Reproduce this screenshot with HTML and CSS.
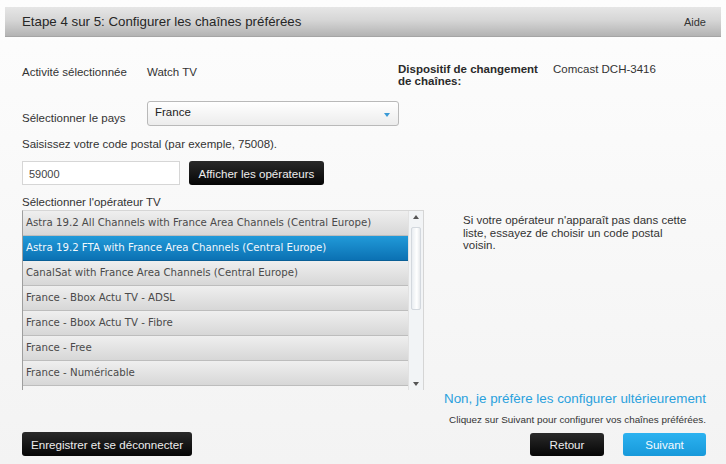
FILE: index.html
```html
<!DOCTYPE html>
<html lang="fr">
<head>
<meta charset="utf-8">
<title>Configurer les chaînes préférées</title>
<link rel="stylesheet" href="styles.css">
</head>
<body>
<div class="page">
  <div class="titlebar">
    <span class="title">Etape 4 sur 5: Configurer les chaînes préférées</span>
    <span class="help">Aide</span>
  </div>

  <div class="main">
    <div class="left">
      <div class="row activity">
        <span class="label">Activité sélectionnée</span>
        <span class="value">Watch TV</span>
      </div>
      <div class="row country">
        <span class="label">Sélectionner le pays</span>
        <div class="select">
          <span>France</span>
          <svg class="caret" width="6" height="4" viewBox="0 0 6 4"><path d="M0 0h6L3 4z" fill="#3a9ad6"/></svg>
        </div>
      </div>
      <div class="hint">Saisissez votre code postal (par exemple, 75008).</div>
      <div class="row zip">
        <div class="input">59000</div>
        <button class="btn dark show">Afficher les opérateurs</button>
      </div>
      <div class="hint op">Sélectionner l'opérateur TV</div>
      <div class="listbox">
        <ul class="options">
          <li>Astra 19.2 All Channels with France Area Channels (Central Europe)</li>
          <li class="selected">Astra 19.2 FTA with France Area Channels (Central Europe)</li>
          <li>CanalSat with France Area Channels (Central Europe)</li>
          <li>France - Bbox Actu TV - ADSL</li>
          <li>France - Bbox Actu TV - Fibre</li>
          <li>France - Free</li>
          <li>France - Numéricable</li>
        </ul>
        <div class="scrollbar">
          <svg class="arrow" width="6" height="4" viewBox="0 0 6 4"><path d="M0 4h6L3 0z" fill="#555"/></svg>
          <div class="track"><div class="thumb"></div></div>
          <svg class="arrow" width="6" height="4" viewBox="0 0 6 4"><path d="M0 0h6L3 4z" fill="#555"/></svg>
        </div>
      </div>
    </div>

    <div class="right">
      <div class="device">
        <span class="dlabel">Dispositif de changement de chaînes:</span>
        <span class="dvalue">Comcast DCH-3416</span>
      </div>
      <p class="note">Si votre opérateur n'apparaît pas dans cette liste, essayez de choisir un code postal voisin.</p>
    </div>
  </div>

  <div class="footer">
    <button class="btn dark logout">Enregistrer et se déconnecter</button>
    <div class="nav">
      <a class="later" href="#">Non, je préfère les configurer ultérieurement</a>
      <div class="small">Cliquez sur Suivant pour configurer vos chaînes préférées.</div>
      <div class="buttons">
        <button class="btn dark back">Retour</button>
        <button class="btn blue next">Suivant</button>
      </div>
    </div>
  </div>
</div>
</body>
</html>
```

FILE: styles.css
```css
* { box-sizing: border-box; }

html, body {
  margin: 0;
  height: 100%;
}

body {
  background: linear-gradient(180deg, #fdfdfd 0%, #f3f3f3 100%);
  font-family: "Liberation Sans", Arial, sans-serif;
  color: #2b2b2b;
  font-size: 11.5px;
}

.page {
  height: 464px;
  display: flex;
  flex-direction: column;
  padding: 7px 5px 0 5px;
}

/* top step bar */
.titlebar {
  height: 30px;
  background: linear-gradient(180deg, #e6e6e6 0%, #d6d6d6 45%, #b3b3b3 100%);
  border-bottom: 1px solid #a5a5a5;
  display: flex;
  align-items: center;
  justify-content: space-between;
  padding: 0 15px 0 17px;
}

.title {
  font-size: 13.3px;
  color: #262626;
}

.help {
  font-size: 11px;
  color: #333;
}

/* body of the step */
.main {
  display: flex;
  padding: 0 0 0 17px;
}

.left {
  width: 402px;
  display: flex;
  flex-direction: column;
}

.row {
  display: flex;
  align-items: center;
}

.activity {
  margin-top: 28px;
  height: 14px;
}

.label {
  width: 125px;
  color: #333;
}

.value {
  color: #333;
}

.country {
  margin-top: 22px;
}

.country .label {
  padding-top: 8px;
}

.select {
  width: 252px;
  height: 25px;
  border: 1px solid #b9b9b9;
  border-radius: 3px;
  background: linear-gradient(180deg, #ffffff 0%, #ececec 100%);
  display: flex;
  justify-content: space-between;
  align-items: flex-start;
  padding: 4px 8px 0 7px;
  color: #222;
  font-size: 11.5px;
}

.caret {
  margin-top: 7px;
}

.hint {
  margin-top: 12px;
  color: #333;
}

.zip {
  margin-top: 11px;
  gap: 9px;
}

.input {
  width: 158px;
  height: 24px;
  border: 1px solid #d6d6d6;
  background: #fff;
  padding: 6px 0 0 6px;
  font-size: 11px;
  color: #444;
}

.btn {
  border: 0;
  font-family: "Liberation Sans", Arial, sans-serif;
  font-size: 11.6px;
  border-radius: 3px;
  cursor: pointer;
  padding: 0;
}

.btn.dark {
  background: linear-gradient(180deg, #2a2a2a 0%, #050505 100%);
  color: #ededed;
}

.btn.blue {
  background: linear-gradient(180deg, #2cb2f0 0%, #1799da 100%);
  color: #f4fbff;
}

.show {
  width: 135px;
  height: 24px;
}

.op {
  margin-top: 11px;
}

/* operator list */
.listbox {
  margin-top: 2px;
  display: flex;
  width: 402px;
  height: 180px;
  border-left: 1px solid #9e9e9e;
  border-top: 1px solid #d6d6d6;
}

.options {
  list-style: none;
  margin: 0;
  padding: 0;
  width: 386px;
  overflow: hidden;
}

.options li {
  height: 25px;
  line-height: 24px;
  padding-left: 3px;
  font-family: "DejaVu Sans", Verdana, sans-serif;
  font-size: 10.2px;
  color: #4a4a4a;
  background: linear-gradient(180deg, #efefef 0%, #d7d7d7 100%);
  border-bottom: 1px solid #bdbdbd;
  white-space: nowrap;
}

.options li.selected {
  background: linear-gradient(180deg, #219ad9 0%, #0b71b3 100%);
  color: #f2f8fc;
  border-bottom-color: #0a5f96;
}

.scrollbar {
  width: 16px;
  display: flex;
  flex-direction: column;
  align-items: center;
  background: #f2f4f6;
  border-left: 1px solid #e2e2e2;
  border-right: 1px solid #d5d5d5;
}

.scrollbar .arrow {
  margin: 4px 0;
}

.track {
  flex: 1;
  width: 12px;
  padding: 4px 1px 0;
}

.thumb {
  height: 83px;
  background: linear-gradient(90deg, #e9edf1 0%, #ffffff 60%, #e6e9ec 100%);
  border: 1px solid #d3d8de;
  border-radius: 2px;
}

.right {
  flex: 1;
}

/* device block starts a little left of the list's right edge */
.device {
  margin: 26px 0 0 -26px;
  display: flex;
  gap: 13px;
}

.dlabel {
  width: 142px;
  font-weight: bold;
  color: #2a2a2a;
  line-height: 12px;
}

.dvalue {
  color: #333;
  line-height: 12px;
}

.note {
  margin: 127px 0 0 39px;
  width: 226px;
  line-height: 12.5px;
  color: #333;
}

/* bottom actions */
.footer {
  margin-top: auto;
  display: flex;
  justify-content: space-between;
  align-items: flex-end;
  padding: 0 15px 8px 17px;
}

.logout {
  width: 170px;
  height: 24px;
}

.nav {
  display: flex;
  flex-direction: column;
  align-items: flex-end;
}

.later {
  color: #2aa1dd;
  text-decoration: none;
  font-size: 13.4px;
}

.small {
  margin-top: 8px;
  font-size: 9.9px;
  color: #333;
}

.buttons {
  margin-top: 8px;
  display: flex;
  gap: 19px;
}

.back, .next {
  width: 74px;
  height: 23px;
}

.next {
  width: 83px;
}
```
